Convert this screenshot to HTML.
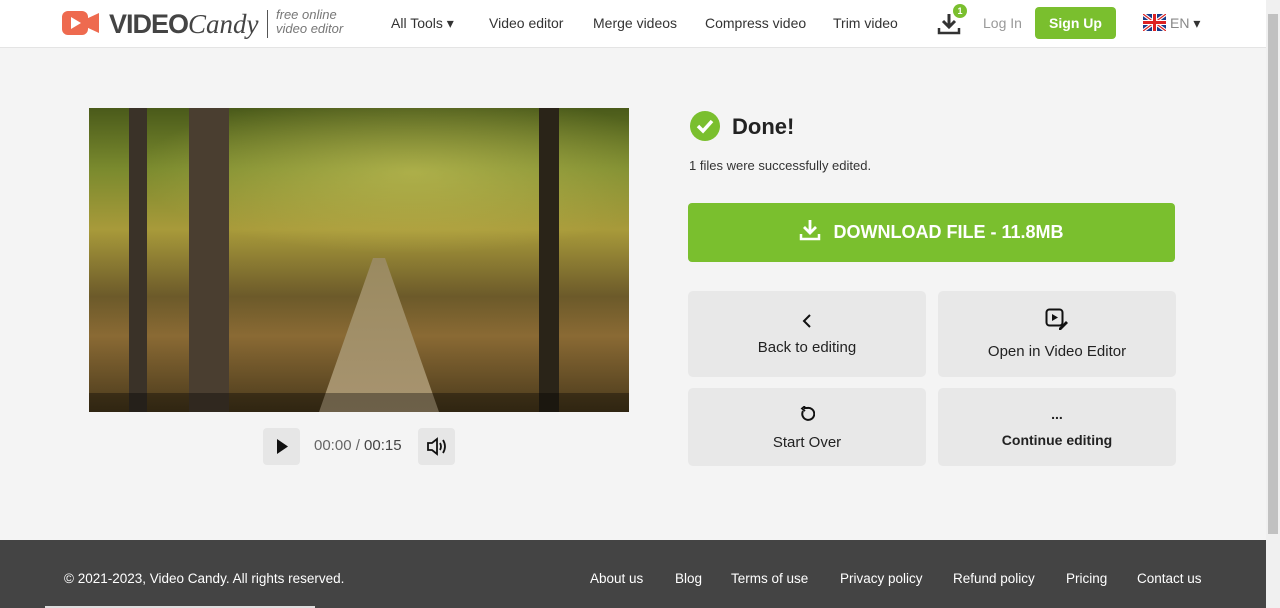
<!DOCTYPE html>
<html><head><meta charset="utf-8"><style>
*{margin:0;padding:0;box-sizing:border-box}
body{width:1280px;height:608px;overflow:hidden;background:#f4f4f4;font-family:"Liberation Sans",sans-serif;color:#222;position:relative}
.hdr{position:absolute;left:0;top:0;width:1266px;height:48px;background:#fff;border-bottom:1px solid #e4e4e4}
.a{position:absolute;font-size:14px;color:#333;top:15px}
.sb{position:absolute;right:0;top:0;width:14px;height:608px;background:#f0f0f0}
.sb div{position:absolute;left:2px;top:14px;width:10px;height:520px;background:#c1c1c1}
.card{position:absolute;background:#e8e8e8;border-radius:5px;text-align:center;font-size:15px;color:#222}
.foot{position:absolute;left:0;top:540px;width:1266px;height:68px;background:#444;color:#fff;font-size:13.5px}
.foot span{position:absolute;top:31px}
</style></head><body>
<div class="hdr">
 <svg style="position:absolute;left:62px;top:11px" width="38" height="24"><rect x="0" y="0" width="26" height="24" rx="6" fill="#ee6a4f"/><path d="M24 8 L37 2 V22 L24 16Z" fill="#ee6a4f"/><path d="M9 6 L19 12 L9 18Z" fill="#fff"/></svg>
 <div style="position:absolute;left:109px;top:9px;font-size:27px;font-weight:bold;color:#444;letter-spacing:-1px">VIDEO<span style="font-family:'Liberation Serif',serif;font-style:italic;font-weight:normal;letter-spacing:0">Candy</span></div>
 <div style="position:absolute;left:267px;top:10px;width:1px;height:28px;background:#555"></div>
 <div style="position:absolute;left:276px;top:8px;font-size:13px;font-style:italic;color:#777;line-height:14px">free online<br>video editor</div>
 <div class="a" style="left:391px">All Tools ▾</div>
 <div class="a" style="left:489px">Video editor</div>
 <div class="a" style="left:593px">Merge videos</div>
 <div class="a" style="left:705px">Compress video</div>
 <div class="a" style="left:833px">Trim video</div>
 <svg style="position:absolute;left:937px;top:12px" width="24" height="24"><path d="M12 2 V14 M6 9 L12 15 L18 9" stroke="#333" stroke-width="3" fill="none"/><path d="M2 16 V21 H22 V16" stroke="#333" stroke-width="2.5" fill="none"/></svg>
 <div style="position:absolute;left:953px;top:4px;width:14px;height:14px;border-radius:7px;background:#7abf2e;color:#fff;font-size:9px;font-weight:bold;text-align:center;line-height:14px">1</div>
 <div class="a" style="left:983px;color:#999">Log In</div>
 <div style="position:absolute;left:1035px;top:7px;width:81px;height:32px;background:#7abf2e;border-radius:4px;color:#fff;font-weight:bold;font-size:14px;text-align:center;line-height:32px">Sign Up</div>
 <svg style="position:absolute;left:1143px;top:14px" width="23" height="17"><rect width="23" height="17" fill="#1a3b8a"/><path d="M0 0L23 17M23 0L0 17" stroke="#fff" stroke-width="3.5"/><path d="M0 0L23 17M23 0L0 17" stroke="#d22" stroke-width="1.2"/><path d="M11.5 0V17M0 8.5H23" stroke="#fff" stroke-width="5"/><path d="M11.5 0V17M0 8.5H23" stroke="#d22" stroke-width="3"/></svg>
 <div class="a" style="left:1170px;color:#888">EN <span style="color:#333">▾</span></div>
</div>
<div class="sb"><div></div></div>
<div style="position:absolute;left:89px;top:108px;width:540px;height:304px;background:linear-gradient(180deg,#4a5a1a 0%,#7a8a2e 20%,#a89a3a 40%,#6c5a2a 62%,#8a6a34 75%,#4a3a1c 100%);overflow:hidden">
 <div style="position:absolute;left:0;top:0;width:540px;height:160px;background:radial-gradient(ellipse at 60% 40%,rgba(220,210,100,.5),rgba(0,0,0,0) 60%)"></div>
 <div style="position:absolute;left:100px;top:0;width:40px;height:304px;background:#4a3e30"></div>
 <div style="position:absolute;left:40px;top:0;width:18px;height:304px;background:#3a3228"></div>
 <div style="position:absolute;left:450px;top:0;width:20px;height:304px;background:#2a2418"></div>
 <div style="position:absolute;left:230px;top:150px;width:120px;height:154px;background:linear-gradient(180deg,#9a8a60,#a89470);clip-path:polygon(45% 0,55% 0,100% 100%,0 100%)"></div>
 <div style="position:absolute;left:0;top:285px;width:540px;height:19px;background:rgba(0,0,0,.35)"></div>
</div>
<div style="position:absolute;left:263px;top:428px;width:37px;height:37px;background:#e6e6e6;border-radius:4px"><svg width="37" height="37"><path d="M14 11 L25 18.5 L14 26Z" fill="#111"/></svg></div>
<div style="position:absolute;left:314px;top:437px;font-size:15px;color:#666">00:00 / <span style="color:#444">00:15</span></div>
<div style="position:absolute;left:418px;top:428px;width:37px;height:37px;background:#e6e6e6;border-radius:4px"><svg width="37" height="37"><path d="M10 15H14L19 11V26L14 22H10Z" fill="none" stroke="#111" stroke-width="1.8"/><path d="M22 15Q24 18.5 22 22M25 12Q29 18.5 25 25" fill="none" stroke="#111" stroke-width="1.8"/></svg></div>
<svg style="position:absolute;left:689px;top:110px" width="32" height="32"><circle cx="16" cy="16" r="15" fill="#7abf2e"/><path d="M9 16 L14 21 L23 11" stroke="#fff" stroke-width="3.5" fill="none"/></svg>
<div style="position:absolute;left:732px;top:114px;font-size:22px;font-weight:bold">Done!</div>
<div style="position:absolute;left:689px;top:158px;font-size:13px;color:#333">1 files were successfully edited.</div>
<div style="position:absolute;left:688px;top:203px;width:487px;height:59px;background:#7abf2e;border-radius:4px;color:#fff;font-weight:bold;font-size:18px;line-height:59px;text-align:center"><svg style="vertical-align:-3px;margin-right:12px" width="22" height="22"><path d="M11 1V14M5 8L11 14L17 8" stroke="#fff" stroke-width="2.8" fill="none"/><path d="M2 15V20H20V15" stroke="#fff" stroke-width="2.5" fill="none"/></svg>DOWNLOAD FILE - 11.8MB</div>
<div class="card" style="left:688px;top:291px;width:238px;height:86px"><svg style="margin-top:22px" width="12" height="16"><path d="M9 2L3 8L9 14" fill="none" stroke="#111" stroke-width="2"/></svg><div style="margin-top:6px">Back to editing</div></div>
<div class="card" style="left:938px;top:291px;width:238px;height:86px"><svg style="margin-top:17px" width="24" height="24"><rect x="1.5" y="1.5" width="16" height="16" rx="3" fill="none" stroke="#111" stroke-width="2"/><path d="M7 6L13 9.5L7 13Z" fill="#111"/><path d="M14 20L21 13L23 15L16 22H14Z" fill="#111"/></svg><div style="margin-top:7px">Open in Video Editor</div></div>
<div class="card" style="left:688px;top:388px;width:238px;height:78px"><svg style="margin-top:18px" width="16" height="16"><path d="M4 5A6 6 0 1 0 8 2H5" fill="none" stroke="#111" stroke-width="2"/><path d="M6 0L3 2.5L6 5" fill="none" stroke="#111" stroke-width="1.8"/></svg><div style="margin-top:8px">Start Over</div></div>
<div class="card" style="left:938px;top:388px;width:238px;height:78px;font-weight:bold;font-size:14px"><div style="margin-top:18px">...</div><div style="margin-top:10px">Continue editing</div></div>
<div class="foot">
 <span style="left:64px">© 2021-2023, Video Candy. All rights reserved.</span>
 <span style="left:590px">About us</span><span style="left:675px">Blog</span><span style="left:731px">Terms of use</span><span style="left:840px">Privacy policy</span><span style="left:953px">Refund policy</span><span style="left:1066px">Pricing</span><span style="left:1137px">Contact us</span>
 <div style="position:absolute;left:45px;top:66px;width:270px;height:2px;background:#ddd"></div>
</div>
</body></html>
